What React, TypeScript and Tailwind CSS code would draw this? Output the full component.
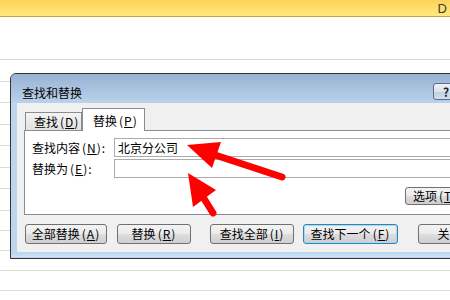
import {FC, ReactNode} from "react";

const cjk = "font-['Noto_Sans_CJK_SC','Liberation_Sans',sans-serif]";

// Excel-like rows behind the dialog (bottom border = gridline)
const rows = [
    "h-[22px]", "h-[21px]", "h-[22px]", "h-[21px]", "h-[22px]", "h-[21px]",
    "h-[22px]", "h-[20px]", "h-[20px]", "h-[20px]", "h-[20px]", "h-[20px]",
];

const Key: FC<{k: string}> = ({k}) => (
    <span className="ml-[2px] tracking-[1px]">(<span className="underline underline-offset-1">{k}</span>)</span>
);

interface IBtn {
    className: string;
    children: ReactNode;
}

const Btn: FC<IBtn> = ({className, children}) => (
    <div
        className={`flex shrink-0 items-center whitespace-nowrap rounded-[3px] border text-[12px] leading-none text-black bg-[linear-gradient(#f3f3f3,#ebebeb_50%,#dddddd_50%,#cfcfcf)] ${className}`}
    >
        {children}
    </div>
);

const App: FC = () => {
    return (
        <div className={`relative w-[450px] h-[300px] overflow-hidden bg-white ${cjk}`}>
            {/* Column header strip */}
            <div className="h-[17px] flex items-center justify-end pr-[3px] border-b border-[#c4a042] bg-[linear-gradient(#fdd35a,#ffea7e)]">
                <span className="font-['Liberation_Sans',sans-serif] text-[13px] leading-none text-[#3a3a3a]">D</span>
            </div>
            <div className="h-[43px] border-b border-[#d6d6d6]"></div>
            {rows.map((r, i) => (
                <div key={i} className={`${r} border-b border-[#dadada]`}></div>
            ))}

            {/* Find & Replace dialog */}
            <div className="absolute left-[10px] top-[73px] w-[480px] h-[186px] border border-[#333] rounded-tl-[6px] overflow-hidden bg-[#bfd5ee]">
                <div className="h-[29px] flex items-start pl-[11px] bg-[linear-gradient(#97b2d2,#bad2eb)]">
                    <span className="mt-[12px] text-[12px] leading-[14px] text-black">查找和替换</span>
                    <div className="ml-auto mr-[30px] mt-[9px] w-[26px] h-[17px] flex items-center justify-center rounded-[3px] border border-[#5a6e8a] bg-[linear-gradient(#eef2f8,#d9e2ee_50%,#c3d0e2_50%,#d3deeb)] text-[12px] leading-none font-bold text-[#222]">
                        ?
                    </div>
                </div>

                <div className="flex px-[6px]">
                    <div className="flex-1 h-[149px] bg-[#f0f0f0] pl-[7px] pt-[5px] pb-[8px] text-[12px] leading-none text-black whitespace-nowrap">
                        {/* Tabs */}
                        <div className="flex items-end h-[22px]">
                            <div className="ml-[1px] h-[18px] w-[57px] flex items-center pl-[8px] border border-b-0 border-[#898c95] bg-[linear-gradient(#f4f4f4,#e2e2e2)]">
                                查找<Key k="D"/>
                            </div>
                            <div className="relative z-10 -mb-px h-[23px] w-[63px] flex items-center pl-[10px] pt-[2px] border border-b-0 border-[#898c95] bg-white">
                                替换<Key k="P"/>
                            </div>
                        </div>

                        {/* Tab panel */}
                        <div className="w-[453px] border border-[#898c95] bg-white pl-[7px] pr-[7px] pt-[7px] pb-[9px]">
                            <div className="flex items-center h-[19px]">
                                <span className="w-[82px]">查找内容<Key k="N"/>:</span>
                                <div className="flex-1 h-[19px] flex items-center pl-[3px] border border-[#a9abb1] text-[12px]">
                                    北京分公司
                                </div>
                            </div>
                            <div className="flex items-center h-[19px] mt-[2px]">
                                <span className="w-[82px]">替换为<Key k="E"/>:</span>
                                <div className="flex-1 h-[19px] border border-[#a9abb1]"></div>
                            </div>
                            <div className="flex mt-[9px]">
                                <Btn className="ml-[373px] w-[74px] h-[18px] pl-[7px] border-[#707070]">
                                    选项<Key k="T"/> &gt;&gt;
                                </Btn>
                            </div>
                        </div>

                        {/* Action buttons */}
                        <div className="flex mt-[9px]">
                            <Btn className="ml-[1px] w-[82px] h-[20px] justify-center border-[#707070]">全部替换<Key k="A"/></Btn>
                            <Btn className="ml-[10px] w-[74px] h-[20px] justify-center border-[#707070]">替换<Key k="R"/></Btn>
                            <Btn className="ml-[19px] w-[84px] h-[20px] justify-center border-[#707070]">查找全部<Key k="I"/></Btn>
                            <Btn className="ml-[9px] w-[95px] h-[20px] justify-center border-[#3c7fb1] shadow-[inset_0_0_0_1px_#9bdcf8]">查找下一个<Key k="F"/></Btn>
                            <Btn className="ml-[20px] w-[63px] h-[20px] justify-center border-[#707070]">关闭</Btn>
                        </div>
                    </div>
                </div>
                <div className="h-[5px] bg-[linear-gradient(#bcd3ec,#c9e4f6)]"></div>
            </div>

            {/* Red annotation arrows */}
            <svg className="absolute inset-0 pointer-events-none" width="450" height="300" viewBox="0 0 450 300">
                <line x1="212" y1="154" x2="282" y2="177" stroke="#ff0000" strokeWidth="7" strokeLinecap="round"/>
                <polygon points="187,145 221,142 212,168" fill="#ff0000"/>
                <line x1="203" y1="197" x2="213" y2="213" stroke="#ff0000" strokeWidth="7" strokeLinecap="round"/>
                <polygon points="188,173 216,190 193,207" fill="#ff0000"/>
            </svg>
        </div>
    );
};

export default App;
